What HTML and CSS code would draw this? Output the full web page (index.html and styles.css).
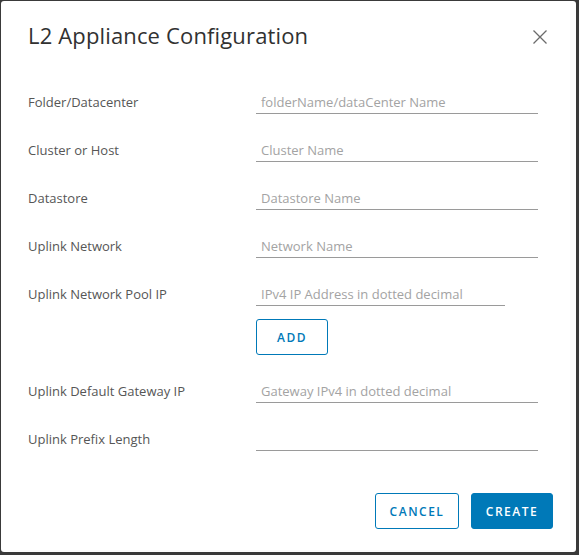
FILE: index.html
```html
<!DOCTYPE html>
<html>
<head>
<meta charset="utf-8">
<link rel="stylesheet" href="styles.css">
</head>
<body>
<div class="modal">
  <div class="modal-header">
    <h3 class="modal-title">L2 Appliance Configuration</h3>
    <button class="close" aria-label="Close">
      <svg width="16" height="16" viewBox="0 0 16 16"><path d="M1.5 1.5 L14.5 14.5 M14.5 1.5 L1.5 14.5" stroke="#6b6b6b" stroke-width="1.3" fill="none"/></svg>
    </button>
  </div>
  <form class="form">
    <div class="row">
      <label class="label">Folder/Datacenter</label>
      <input class="input" placeholder="folderName/dataCenter Name">
    </div>
    <div class="row">
      <label class="label">Cluster or Host</label>
      <input class="input" placeholder="Cluster Name">
    </div>
    <div class="row">
      <label class="label">Datastore</label>
      <input class="input" placeholder="Datastore Name">
    </div>
    <div class="row">
      <label class="label">Uplink Network</label>
      <input class="input" placeholder="Network Name">
    </div>
    <div class="row">
      <label class="label">Uplink Network Pool IP</label>
      <div class="pool">
        <input class="input short" placeholder="IPv4 IP Address in dotted decimal">
        <button type="button" class="btn btn-outline add">ADD</button>
      </div>
    </div>
    <div class="row">
      <label class="label">Uplink Default Gateway IP</label>
      <input class="input" placeholder="Gateway IPv4 in dotted decimal">
    </div>
    <div class="row">
      <label class="label">Uplink Prefix Length</label>
      <input class="input" placeholder="">
    </div>
  </form>
  <div class="modal-footer">
    <button class="btn btn-outline">CANCEL</button>
    <button class="btn btn-primary">CREATE</button>
  </div>
</div>
</body>
</html>
```

FILE: styles.css
```css
html, body {
  margin: 0;
  padding: 0;
  background: #3a3a3a;
  height: 555px;
  overflow: hidden;
}
body {
  font-family: "Open Sans", "Noto Sans", sans-serif;
  color: #565656;
}
.modal {
  box-sizing: border-box;
  margin: 1px 3px 0 1px;
  width: 575px;
  height: 551px;
  background: #fff;
  border-radius: 3px;
  padding: 19px 23px 0 27px;
  display: flex;
  flex-direction: column;
}
.modal-header {
  display: flex;
  align-items: center;
  justify-content: space-between;
  height: 30px;
}
.modal-title {
  margin: 0;
  font-weight: 400;
  font-size: 22px;
  line-height: 30px;
  color: #313131;
  letter-spacing: 0.15px;
}
.close {
  border: 0;
  background: none;
  padding: 0;
  margin-right: 5px;
  margin-top: 4px;
  width: 16px;
  height: 16px;
  display: flex;
}
.form {
  margin-top: 40px;
  display: flex;
  flex-direction: column;
  gap: 24px;
}
.row {
  display: grid;
  grid-template-columns: 228px 282px;
  align-items: start;
}
.label {
  font-size: 13px;
  height: 24px;
  line-height: 25px;
  color: #565656;
}
.input {
  box-sizing: border-box;
  width: 282px;
  height: 24px;
  border: 0;
  border-bottom: 1px solid #9a9a9a;
  padding: 0 5px;
  font-family: inherit;
  font-size: 13px;
  color: #565656;
  outline: none;
  margin: 0;
}
.input::placeholder {
  color: #a3a3a3;
}
.input.short {
  width: 249px;
}
.pool {
  display: flex;
  flex-direction: column;
  align-items: flex-start;
}
.btn {
  box-sizing: border-box;
  height: 36px;
  border-radius: 3px;
  font-family: inherit;
  font-size: 12px;
  font-weight: 600;
  letter-spacing: 1.5px;
  padding: 0 12px;
  cursor: pointer;
}
.btn-outline {
  background: #fff;
  border: 1px solid #0079b8;
  color: #0079b8;
}
.btn-primary {
  background: #0079b8;
  border: 1px solid #0079b8;
  color: #fff;
}
.add {
  margin-top: 13px;
  width: 72px;
}
.modal-footer {
  margin-top: 42px;
  display: flex;
  justify-content: flex-end;
  gap: 12px;
}
.modal-footer .btn-outline { width: 84px; }
.modal-footer .btn-primary { width: 82px; }
```
